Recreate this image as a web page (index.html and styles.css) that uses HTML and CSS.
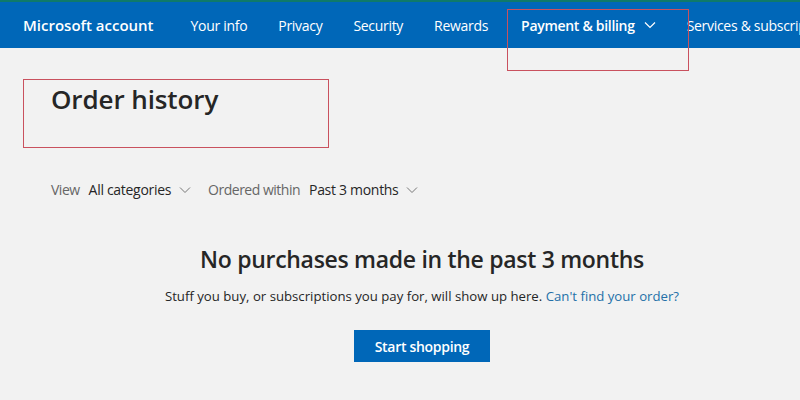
FILE: index.html
```html
<!DOCTYPE html>
<html lang="en">
<head>
    <meta charset="UTF-8">
    <meta name="viewport" content="width=device-width, initial-scale=1.0">
    <title>Order history</title>
    <link rel="stylesheet" href="styles.css">
</head>
<body>
    <header class="topbar">
        <a class="brand" href="#">Microsoft account</a>
        <span class="divider"></span>
        <nav class="nav">
            <a href="#">Your info</a>
            <a href="#">Privacy</a>
            <a href="#">Security</a>
            <a href="#">Rewards</a>
            <a href="#" class="current">Payment &amp; billing
                <svg class="chev" width="12" height="8" viewBox="0 0 12 8"><path d="M1 1.5l5 5 5-5" fill="none" stroke="currentColor" stroke-width="1.2"/></svg>
            </a>
            <a href="#">Services &amp; subscriptions</a>
        </nav>
    </header>
    <div class="mark mark-nav"></div>

    <main class="page">
        <div class="title-wrap">
            <h1>Order history</h1>
            <div class="mark mark-title"></div>
        </div>

        <div class="filters">
            <span class="label">View</span>
            <button class="select">All categories
                <svg class="chev" width="12" height="8" viewBox="0 0 12 8"><path d="M1 1.5l5 5 5-5" fill="none" stroke="currentColor" stroke-width="1"/></svg>
            </button>
            <span class="label">Ordered within</span>
            <button class="select">Past 3 months
                <svg class="chev" width="12" height="8" viewBox="0 0 12 8"><path d="M1 1.5l5 5 5-5" fill="none" stroke="currentColor" stroke-width="1"/></svg>
            </button>
        </div>

        <section class="empty">
            <h2>No purchases made in the past 3 months</h2>
            <p>Stuff you buy, or subscriptions you pay for, will show up here. <a href="#">Can't find your order?</a></p>
            <button class="primary">Start shopping</button>
        </section>
    </main>
</body>
</html>
```

FILE: styles.css
```css
body {
    margin: 0;
    background: #f2f2f2;
    font-family: "Open Sans", "Noto Sans", sans-serif;
    color: #262626;
    overflow: hidden;
}
.topbar {
    display: flex;
    align-items: center;
    height: 46px;
    background: #0067b8;
    border-top: 2px solid #0f7a6a;
    white-space: nowrap;
}
.brand {
    margin-left: 23px;
    color: #fff;
    font-size: 15px;
    font-weight: 600;
    text-decoration: none;
}
.divider {
    width: 1px;
    height: 24px;
    margin: 0 16px 0 21px;
    background: rgba(255, 255, 255, 0.7);
}
.nav {
    display: flex;
    gap: 31px;
}
.nav a {
    color: #fff;
    font-size: 14px;
    text-decoration: none;
    letter-spacing: -0.3px;
    display: flex;
    align-items: center;
}
.nav a.current {
    font-weight: 600;
    margin-left: 2px;
}
.nav .chev {
    margin-left: 9px;
}
.mark {
    position: absolute;
    border: 1px solid #c9515e;
    pointer-events: none;
}
.mark-nav {
    left: 507px;
    top: 9px;
    width: 180px;
    height: 60px;
}
.page {
    padding: 0 7px 0 51px;
}
.title-wrap {
    position: relative;
    padding-top: 33px;
}
h1 {
    margin: 0;
    font-size: 26px;
    font-weight: 600;
    line-height: 36px;
    letter-spacing: -0.1px;
}
.mark-title {
    left: -28px;
    top: 31px;
    width: 304px;
    height: 67px;
}
.filters {
    display: flex;
    align-items: center;
    margin-top: 63px;
    font-size: 14px;
    letter-spacing: -0.3px;
}
.label {
    color: #666;
    margin-right: 9px;
    letter-spacing: -0.5px;
}
.select {
    display: flex;
    align-items: center;
    padding: 0;
    margin-right: 17px;
    border: 0;
    background: none;
    font: inherit;
    letter-spacing: inherit;
    color: #262626;
}
.select .chev {
    margin-left: 8px;
    color: #777;
}
.empty {
    text-align: center;
    margin-top: 44px;
}
h2 {
    margin: 0;
    font-size: 23px;
    font-weight: 600;
    line-height: 32px;
    letter-spacing: -0.3px;
}
.empty p {
    margin: 12px 0 0;
    font-size: 13.2px;
}
.empty a {
    color: #2470a8;
    text-decoration: none;
}
.primary {
    margin-top: 25px;
    height: 32px;
    padding: 0 21px;
    border: 0;
    background: #0067b8;
    color: #fff;
    font: 600 14px "Open Sans", "Noto Sans", sans-serif;
    letter-spacing: -0.3px;
}
```
